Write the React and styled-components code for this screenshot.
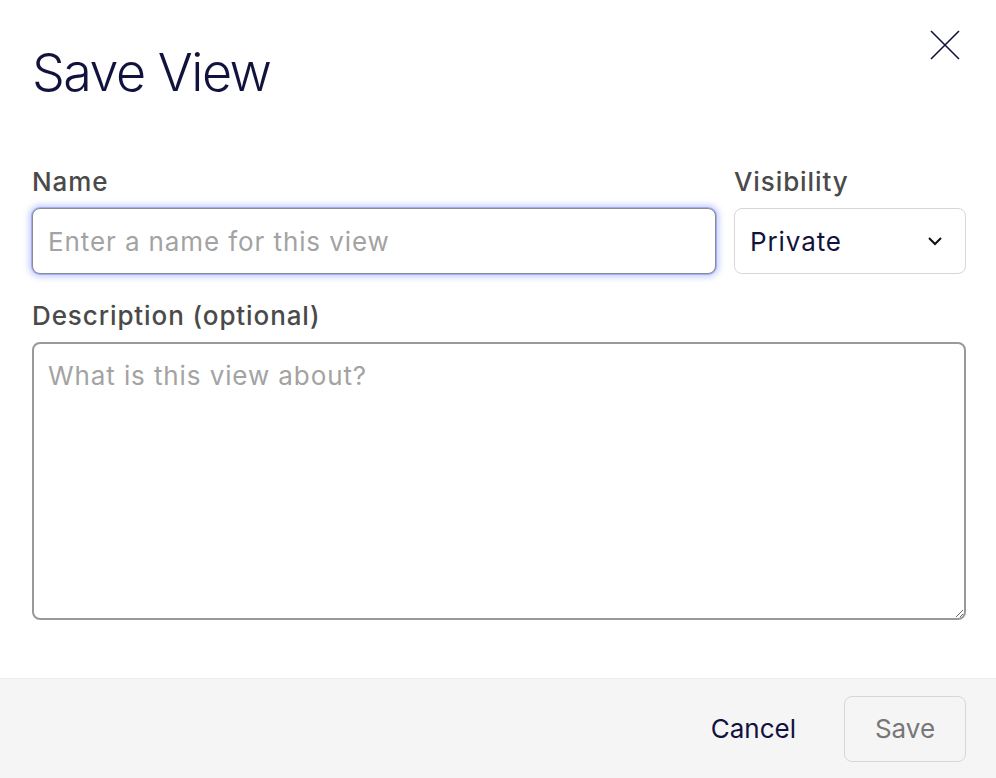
import React from "react";
import styled, { createGlobalStyle } from "styled-components";

const Global = createGlobalStyle`
  html, body { margin: 0; padding: 0; background: #ffffff; }
  body { font-family: Inter, "Noto Sans", sans-serif; }
  * { box-sizing: border-box; }
`;

const Dialog = styled.div`
  width: 996px;
  height: 778px;
  display: flex;
  flex-direction: column;
  background: #ffffff;
`;

const Body = styled.div`
  flex: 1;
  padding: 0 30px 0 32px;
  display: flex;
  flex-direction: column;
`;

const Header = styled.div`
  display: flex;
  justify-content: space-between;
  align-items: flex-start;
  height: 164px;
`;

const Title = styled.h1`
  margin: 41px 0 0;
  font-size: 52px;
  font-weight: 300;
  line-height: 64px;
  color: #12133d;
  letter-spacing: -1.5px;
`;

const CloseButton = styled.button`
  margin: 30px 6px 0 0;
  width: 30px;
  height: 30px;
  padding: 0;
  border: none;
  background: none;
  cursor: pointer;
  display: flex;
`;

const Row = styled.div`
  display: grid;
  grid-template-columns: 1fr 232px;
  column-gap: 18px;
`;

const Field = styled.div`
  display: flex;
  flex-direction: column;
`;

const Label = styled.label`
  font-size: 26px;
  font-weight: 500;
  color: #4a4a4a;
  line-height: 36px;
  letter-spacing: 0.9px;
  margin-bottom: 8px;
`;

const TextInput = styled.input`
  height: 66px;
  border: 1.5px solid ${(p) => (p.$focused ? "#8c8c8c" : "#9a9a9a")};
  border-radius: 8px;
  padding: 0 15px;
  font-family: inherit;
  font-size: 26px;
  letter-spacing: 0.9px;
  color: #12133d;
  outline: none;
  box-shadow: ${(p) =>
    p.$focused
      ? "0 0 0 1px rgba(110,130,255,0.5), 0 0 6px 3px rgba(110,130,255,0.4)"
      : "none"};
  &::placeholder { color: #a3a3a3; }
`;

const Select = styled.div`
  height: 66px;
  border: 1.5px solid #d7d7d7;
  border-radius: 8px;
  padding: 0 22px 0 15px;
  display: flex;
  align-items: center;
  justify-content: space-between;
  font-size: 26px;
  letter-spacing: 0.9px;
  color: #12133d;
`;

const DescriptionField = styled(Field)`
  margin-top: 24px;
`;

const TextArea = styled.textarea`
  height: 278px;
  border: 2px solid #999999;
  border-radius: 8px;
  padding: 16px 14px;
  font-family: inherit;
  font-size: 26px;
  line-height: 32px;
  letter-spacing: 0.9px;
  color: #12133d;
  outline: none;
  resize: vertical;
  &::placeholder { color: #a3a3a3; }
`;

const Footer = styled.div`
  height: 100px;
  background: #f5f5f5;
  border-top: 1.5px solid #ececec;
  display: flex;
  align-items: center;
  justify-content: flex-end;
  gap: 48px;
  padding: 0 30px 0 0;
`;

const TextButton = styled.button`
  border: none;
  background: none;
  padding: 0;
  font-family: inherit;
  font-size: 26px;
  color: #12133d;
  cursor: pointer;
`;

const OutlineButton = styled.button`
  width: 122px;
  height: 66px;
  border: 1.5px solid #d7d7d7;
  border-radius: 8px;
  background: transparent;
  font-family: inherit;
  font-size: 26px;
  color: #777777;
`;

export default function App() {
  return (
    <Dialog>
      <Global />
      <Body>
        <Header>
          <Title>Save View</Title>
          <CloseButton aria-label="Close">
            <svg width="30" height="30" viewBox="0 0 30 30">
              <path d="M1 1 L29 29 M29 1 L1 29" stroke="#12133d" strokeWidth="1.6" fill="none" />
            </svg>
          </CloseButton>
        </Header>
        <Row>
          <Field>
            <Label>Name</Label>
            <TextInput $focused placeholder="Enter a name for this view" />
          </Field>
          <Field>
            <Label>Visibility</Label>
            <Select>
              <span>Private</span>
              <svg width="16" height="10" viewBox="0 0 16 10">
                <path d="M2 2 L8 8 L14 2" stroke="#111" strokeWidth="2" fill="none" />
              </svg>
            </Select>
          </Field>
        </Row>
        <DescriptionField>
          <Label>Description (optional)</Label>
          <TextArea placeholder="What is this view about?" />
        </DescriptionField>
      </Body>
      <Footer>
        <TextButton>Cancel</TextButton>
        <OutlineButton disabled>Save</OutlineButton>
      </Footer>
    </Dialog>
  );
}
